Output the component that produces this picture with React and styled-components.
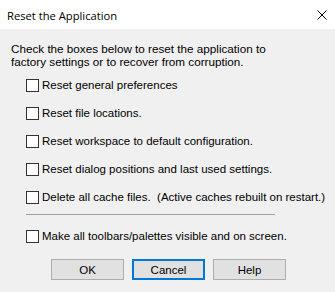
import React from "react";
import styled, { createGlobalStyle } from "styled-components";

// Reset the Application dialog (Windows 10 look)

const GlobalStyle = createGlobalStyle`
  html, body {
    margin: 0;
    padding: 0;
    background: #f0f0f0;
  }
`;

const options = [
  "Reset general preferences",
  "Reset file locations.",
  "Reset workspace to default configuration.",
  "Reset dialog positions and last used settings.",
  "Delete all cache files.\u00a0 (Active caches rebuilt on restart.)",
];

const App = () => (
  <>
    <GlobalStyle />
    <Window>
      <TitleBar>
        <Title>Reset the Application</Title>
        <CloseButton aria-label="Close">
          <svg width="10" height="10" viewBox="0 0 10 10">
            <path d="M0.5 0.5 L9.5 9.5 M9.5 0.5 L0.5 9.5" stroke="#000" strokeWidth="1" />
          </svg>
        </CloseButton>
      </TitleBar>
      <Body>
        <Intro>
          Check the boxes below to reset the application to
          <br />
          factory settings or to recover from corruption.
        </Intro>
        <Options>
          {options.map((label) => (
            <Option key={label}>
              <Box />
              <span>{label}</span>
            </Option>
          ))}
          <Separator />
          <Option>
            <Box />
            <span>Make all toolbars/palettes visible and on screen.</span>
          </Option>
        </Options>
        <Buttons>
          <Button>OK</Button>
          <Button $default>Cancel</Button>
          <Button>Help</Button>
        </Buttons>
      </Body>
    </Window>
  </>
);

const Window = styled.div`
  width: 335px;
  height: 292px;
  background: #f0f0f0;
  display: flex;
  flex-direction: column;
  overflow: hidden;
  font-family: "Liberation Sans", Arial, sans-serif;
  color: #000;
`;

const TitleBar = styled.div`
  height: 29px;
  flex: none;
  background: #fff;
  display: flex;
  align-items: center;
  justify-content: space-between;
  padding: 0 8px 0 7px;
`;

const Title = styled.span`
  font-family: "Open Sans", "Noto Sans", sans-serif;
  font-size: 11.2px;
  margin-top: 1px;
`;

const CloseButton = styled.div`
  width: 10px;
  height: 10px;
  display: flex;
`;

const Body = styled.div`
  display: flex;
  flex-direction: column;
  padding: 13px 0 0 11px;
  font-size: 11.5px;
`;

const Intro = styled.p`
  margin: 0;
  line-height: 13px;
  font-size: 11.7px;
`;

const Options = styled.div`
  display: flex;
  flex-direction: column;
  padding-left: 15px;
  margin-top: 3px;
`;

const Option = styled.label`
  height: 28px;
  display: flex;
  align-items: center;
  gap: 3px;
`;

const Box = styled.span`
  width: 11px;
  height: 11px;
  flex: none;
  background: #fff;
  border: 1px solid #333;
`;

const Separator = styled.div`
  width: 249px;
  height: 1px;
  background: #a0a0a0;
  margin: 3px 0 7px;
`;

const Buttons = styled.div`
  display: flex;
  gap: 8px;
  padding-left: 40px;
  margin-top: 9px;
`;

const Button = styled.div`
  width: 73px;
  height: 21px;
  box-sizing: border-box;
  display: flex;
  align-items: center;
  justify-content: center;
  background: #e1e1e1;
  border: ${(p) => (p.$default ? "2px solid #0078d7" : "1px solid #adadad")};
  font-size: 11.5px;
`;

export default App;
